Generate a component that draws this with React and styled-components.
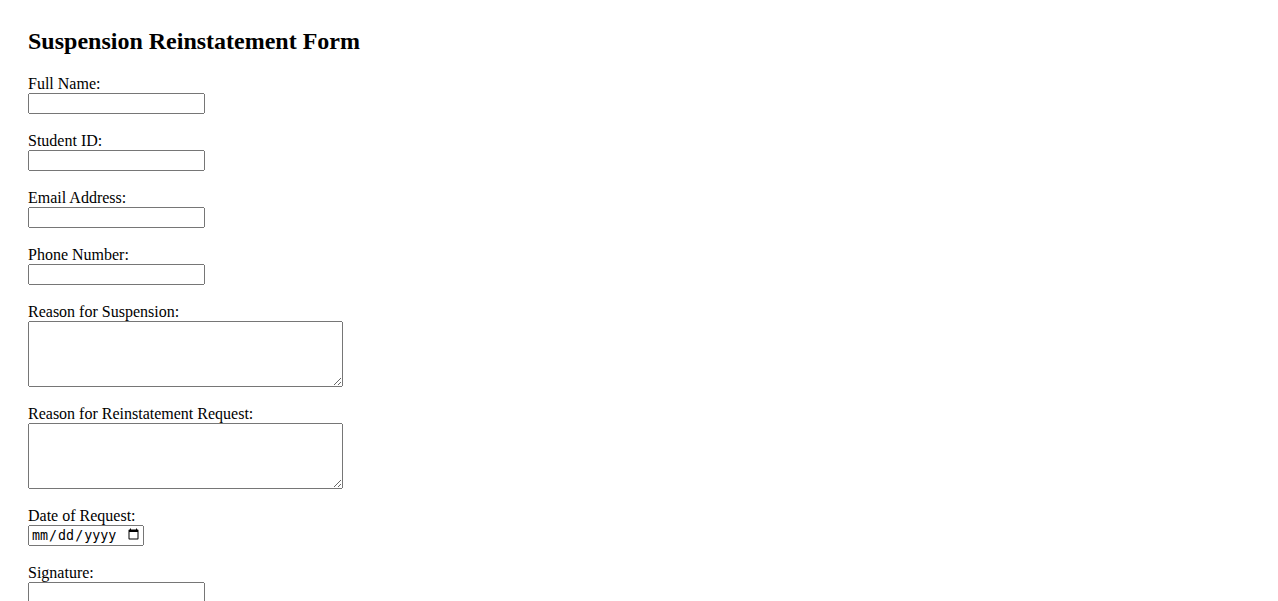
import React from "react";
import styled, { createGlobalStyle } from "styled-components";

const Global = createGlobalStyle`
  html, body { margin: 0; padding: 0; background: #fff; }
  body { font-family: "Liberation Serif", "Times New Roman", serif; font-size: 16px; color: #000; }
`;

const Page = styled.div`
  padding: 28px;
`;

const Title = styled.h2`
  margin: 0 0 19px;
  font-size: 24px;
  font-weight: bold;
  line-height: 27.6px;
`;

const Form = styled.form`
  display: flex;
  flex-direction: column;
  align-items: flex-start;
`;

const Group = styled.div`
  display: flex;
  flex-direction: column;
  align-items: flex-start;
  margin-bottom: 18px;
`;

const Label = styled.label`
  display: block;
  line-height: 18px;
  height: 18px;
`;

const TextInput = styled.input`
  box-sizing: border-box;
  width: 177px;
  height: 21px;
  margin: 0;
`;

const DateInput = styled.input`
  box-sizing: border-box;
  width: 116px;
  height: 21px;
  margin: 0;
`;

const TextArea = styled.textarea`
  box-sizing: border-box;
  width: 315px;
  height: 66px;
  margin: 0;
`;

const fields = [
  { id: "name", label: "Full Name:", kind: "text" },
  { id: "sid", label: "Student ID:", kind: "text" },
  { id: "email", label: "Email Address:", kind: "email" },
  { id: "phone", label: "Phone Number:", kind: "tel" },
  { id: "reason", label: "Reason for Suspension:", kind: "area" },
  { id: "reinstate", label: "Reason for Reinstatement Request:", kind: "area" },
  { id: "date", label: "Date of Request:", kind: "date" },
  { id: "signature", label: "Signature:", kind: "text" },
];

export default function App() {
  return (
    <Page>
      <Global />
      <Title>Suspension Reinstatement Form</Title>
      <Form onSubmit={(e) => e.preventDefault()}>
        {fields.map((f) => (
          <Group key={f.id}>
            <Label htmlFor={f.id}>{f.label}</Label>
            {f.kind === "area" ? (
              <TextArea id={f.id} />
            ) : f.kind === "date" ? (
              <DateInput id={f.id} type="date" />
            ) : (
              <TextInput id={f.id} type={f.kind} />
            )}
          </Group>
        ))}
      </Form>
    </Page>
  );
}
